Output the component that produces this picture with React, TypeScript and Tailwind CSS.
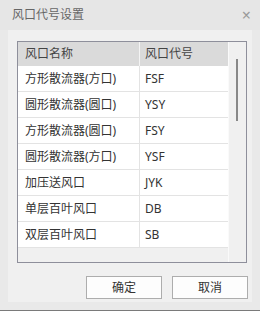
import React from 'react';

interface VentRow {
  name: string;
  code: string;
}

const rows: VentRow[] = [
  { name: '方形散流器(方口)', code: 'FSF' },
  { name: '圆形散流器(圆口)', code: 'YSY' },
  { name: '方形散流器(圆口)', code: 'FSY' },
  { name: '圆形散流器(方口)', code: 'YSF' },
  { name: '加压送风口', code: 'JYK' },
  { name: '单层百叶风口', code: 'DB' },
  { name: '双层百叶风口', code: 'SB' },
];

const font = { fontFamily: '"Noto Sans", "Noto Sans CJK SC", sans-serif' };

const App: React.FC = () => {
  return (
    <div className="w-[260px] h-[314px] bg-white overflow-hidden text-[12px] text-[#333]" style={font}>
      {/* title bar */}
      <div className="h-[30px] bg-[#e6e6e6] flex items-center justify-between pl-[12px] pr-[9px]">
        <span className="text-[12px] text-[#666]">风口代号设置</span>
        <span className="text-[16px] leading-none text-[#9a9a9a]">×</span>
      </div>

      {/* body */}
      <div className="h-[280px] bg-[#e9e9e9] px-[8px] pb-[8px]">
        <div className="h-[272px] bg-[#f0f0f0] pt-[11px] pl-[9px]">
          <div className="w-[230px] h-[222px] border border-[#8e8f9b] flex">
            <div className="w-[210px] flex flex-col bg-[#f0f0f0]">
              <div className="h-[24px] flex bg-[#dadada] text-[#444]">
                <div className="w-[122px] border-r border-[#f4f4f4] flex items-center pl-[7px]">风口名称</div>
                <div className="w-[88px] flex items-center pl-[5px]">风口代号</div>
              </div>
              {rows.map((row, i) => (
                <div key={i} className="h-[26px] flex bg-white border-b border-[#e3e3e3]">
                  <div className="w-[122px] border-r border-[#e3e3e3] flex items-center pl-[7px]">{row.name}</div>
                  <div className="w-[88px] flex items-center pl-[5px]">{row.code}</div>
                </div>
              ))}
            </div>
            <div className="w-[18px] bg-[#f0f0f0] border-l border-[#fafafa] pt-[17px] pl-[7px]">
              <div className="w-[2px] h-[62px] bg-[#888]" />
            </div>
          </div>

          <div className="mt-[13px] flex gap-[10px] pl-[69px]">
            <button className="w-[76px] h-[23px] border border-[#adadad] bg-[#fdfdfd] text-[12px] text-[#333]">确定</button>
            <button className="w-[76px] h-[23px] border border-[#adadad] bg-[#fdfdfd] text-[12px] text-[#333]">取消</button>
          </div>
        </div>
      </div>

      <div className="h-[4px] border-t border-[#7a7a7a] bg-white" />
    </div>
  );
};

export default App;
